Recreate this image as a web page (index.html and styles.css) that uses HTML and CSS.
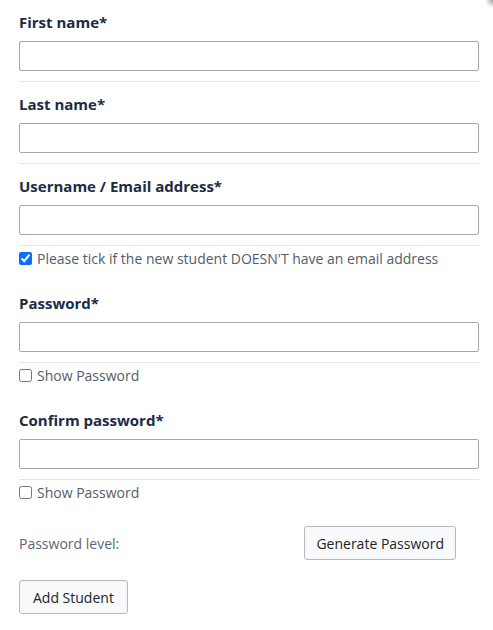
FILE: index.html
```html
<!DOCTYPE html>
<html>
  <head>
    <title>Add Student</title>
    <meta charset="utf-8" />
    <meta name="viewport" content="width=device-width, initial-scale=1" />
    <link rel="stylesheet" href="styles.css">
  </head>
  <body>
    <div class="corner"></div>
    <form class="student-form">
      <div class="field">
        <label for="firstname">First name*</label>
        <input type="text" id="firstname" />
        <hr />
      </div>

      <div class="field">
        <label for="lastname">Last name*</label>
        <input type="text" id="lastname" />
        <hr />
      </div>

      <div class="field">
        <label for="username">Username / Email address*</label>
        <input type="text" id="username" />
        <hr />
        <div class="check">
          <input type="checkbox" id="noemail" checked />
          <label for="noemail">Please tick if the new student DOESN'T have an email address</label>
        </div>
      </div>

      <div class="field">
        <label for="password">Password*</label>
        <input type="password" id="password" />
        <hr />
        <div class="check">
          <input type="checkbox" id="showpass1" />
          <label for="showpass1">Show Password</label>
        </div>
      </div>

      <div class="field">
        <label for="confirm">Confirm password*</label>
        <input type="password" id="confirm" />
        <hr />
        <div class="check">
          <input type="checkbox" id="showpass2" />
          <label for="showpass2">Show Password</label>
        </div>
      </div>

      <div class="level-row">
        <span class="level">Password level:</span>
        <button type="button" class="btn btn-generate">Generate Password</button>
      </div>

      <button type="submit" class="btn btn-add">Add Student</button>
    </form>
  </body>
</html>
```

FILE: styles.css
```css
body {
  margin: 0;
  background: #fff;
  font-family: "Open Sans", "Noto Sans", sans-serif;
  color: #535d69;
  font-size: 14px;
}

/* little shadow in the top right corner */
.corner {
  position: absolute;
  top: 0;
  right: 0;
  width: 10px;
  height: 7px;
  background: radial-gradient(circle at 100% 0, #9a9a9a 0, #c8c8c8 3px, rgba(255, 255, 255, 0) 8px);
}

.student-form {
  width: 460px;
  padding: 12px 0 0 19px;
}

.field {
  margin-bottom: 12px;
}

.field > label {
  display: block;
  font-weight: 700;
  font-size: 15px;
  line-height: 20px;
  color: #1b2b44;
  margin-bottom: 9px;
}

.field > input {
  display: block;
  box-sizing: border-box;
  width: 460px;
  height: 30px;
  margin: 0;
  border: 1px solid #a8a8a8;
  border-radius: 2px;
  padding: 0 8px;
}

.field hr {
  margin: 10px 0 0;
  border: 0;
  border-top: 1px solid #e6e6e6;
  height: 0;
}

.check {
  display: flex;
  align-items: center;
  height: 20px;
  margin-top: 2px;
  margin-bottom: 25px;
}

.check input {
  margin: 1px 5px 0 0;
  width: 13px;
  height: 13px;
  accent-color: #0d6efd;
}

.level-row {
  display: flex;
  justify-content: space-between;
  align-items: center;
  width: 437px;
  margin-top: -1px;
}

.level {
  color: #5d6773;
}

.btn {
  font-family: "Open Sans", "Noto Sans", sans-serif;
  font-size: 14px;
  color: #212529;
  background: #f8f9fa;
  border: 1px solid #b8b8b8;
  border-radius: 3px;
  height: 34px;
  padding: 0 11px;
}

.btn-add {
  margin-top: 20px;
  padding: 0 13px;
}
```
